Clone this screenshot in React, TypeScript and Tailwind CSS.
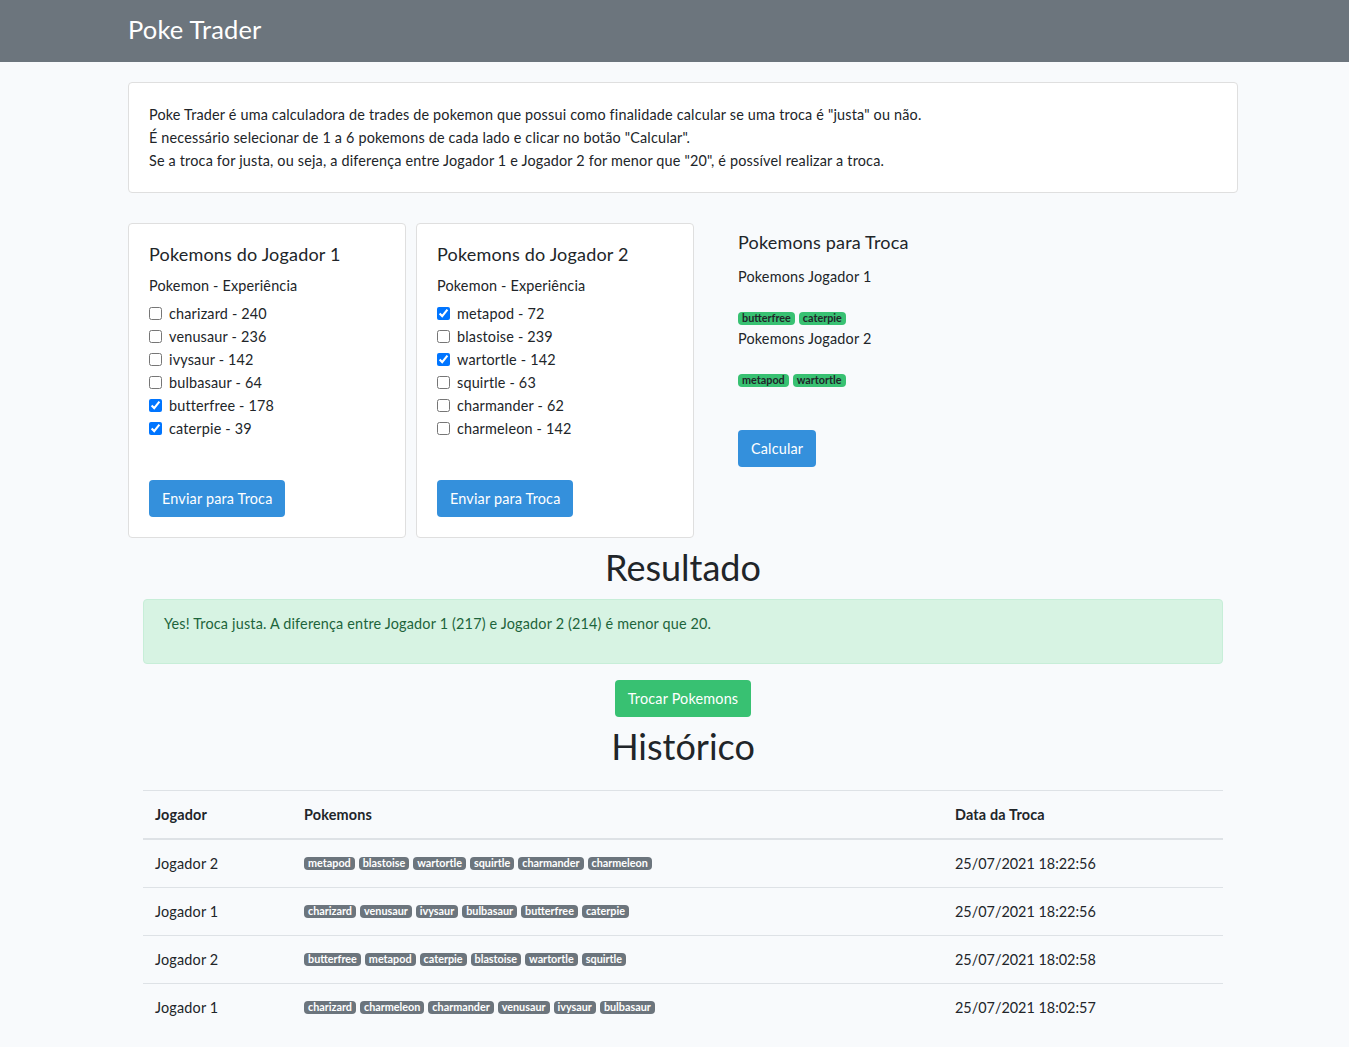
import React from "react";

const font = { fontFamily: "Lato, 'Noto Sans', sans-serif" };

function Badge({ children, tone }: { children: React.ReactNode; tone: "green" | "gray" }) {
  return (
    <span
      className={
        "inline-flex items-center h-[13px] rounded-[4px] px-[4px] text-[10.8px] font-bold leading-none mr-[4px] tracking-normal " +
        (tone === "green" ? "bg-[#38c172] text-[#212529]" : "bg-[#6c757d] text-white")
      }
    >
      {children}
    </span>
  );
}

function PlayerCard({ title, items }: { title: string; items: [string, boolean][] }) {
  return (
    <div className="w-[278px] h-[315px] rounded-[4px] border border-[#dfdfdf] bg-white px-[20px] pt-[19px] flex flex-col">
      <div className="text-[18px] leading-[22px] text-[#212529]">{title}</div>
      <div className="leading-[23px] pt-[9px]">Pokemon - Experiência</div>
      <div className="pt-[5px]">
        {items.map(([name, checked]) => (
          <label key={name} className="flex items-center h-[23px]">
            <input type="checkbox" defaultChecked={checked} className="w-[13px] h-[13px] m-0 mr-[7px]" />
            <span>{name}</span>
          </label>
        ))}
      </div>
      <div className="pt-[40px]">
        <button className="h-[37px] px-[13px] rounded-[4px] bg-[#3490dc] text-white text-[14.4px]">
          Enviar para Troca
        </button>
      </div>
    </div>
  );
}

const history: { j: string; p: string[]; d: string }[] = [
  { j: "Jogador 2", p: ["metapod", "blastoise", "wartortle", "squirtle", "charmander", "charmeleon"], d: "25/07/2021 18:22:56" },
  { j: "Jogador 1", p: ["charizard", "venusaur", "ivysaur", "bulbasaur", "butterfree", "caterpie"], d: "25/07/2021 18:22:56" },
  { j: "Jogador 2", p: ["butterfree", "metapod", "caterpie", "blastoise", "wartortle", "squirtle"], d: "25/07/2021 18:02:58" },
  { j: "Jogador 1", p: ["charizard", "charmeleon", "charmander", "venusaur", "ivysaur", "bulbasaur"], d: "25/07/2021 18:02:57" },
];

export default function App() {
  return (
    <div className="min-h-[1047px] bg-[#f8fafc] text-[#212529] text-[14.4px] leading-[23px] tracking-[0.18px]" style={font}>
      <nav className="h-[62px] bg-[#6c757d] flex items-center pb-[3px]">
        <div className="ml-[128px] text-white text-[25.5px] leading-none">Poke Trader</div>
      </nav>
      <div className="ml-[128px] w-[1110px]">
        <div className="mt-[20px] rounded-[4px] border border-[#dfdfdf] bg-white p-[20px]">
          <p>Poke Trader é uma calculadora de trades de pokemon que possui como finalidade calcular se uma troca é "justa" ou não.</p>
          <p>É necessário selecionar de 1 a 6 pokemons de cada lado e clicar no botão "Calcular".</p>
          <p>Se a troca for justa, ou seja, a diferença entre Jogador 1 e Jogador 2 for menor que "20", é possível realizar a troca.</p>
        </div>
        <div className="mt-[30px] flex">
          <PlayerCard
            title="Pokemons do Jogador 1"
            items={[["charizard - 240", false], ["venusaur - 236", false], ["ivysaur - 142", false], ["bulbasaur - 64", false], ["butterfree - 178", true], ["caterpie - 39", true]]}
          />
          <div className="w-[10px]" />
          <PlayerCard
            title="Pokemons do Jogador 2"
            items={[["metapod - 72", true], ["blastoise - 239", false], ["wartortle - 142", true], ["squirtle - 63", false], ["charmander - 62", false], ["charmeleon - 142", false]]}
          />
          <div className="ml-[44px] pt-[8px]">
            <div className="text-[18px] leading-[22px]">Pokemons para Troca</div>
            <div className="mt-[12px]">Pokemons Jogador 1</div>
            <div className="mt-[22px] h-[16px] flex items-center">
              <Badge tone="green">butterfree</Badge>
              <Badge tone="green">caterpie</Badge>
            </div>
            <div className="mt-[1px]">Pokemons Jogador 2</div>
            <div className="mt-[22px] h-[16px] flex items-center">
              <Badge tone="green">metapod</Badge>
              <Badge tone="green">wartortle</Badge>
            </div>
            <button className="mt-[42px] h-[37px] px-[13px] rounded-[4px] bg-[#3490dc] text-white text-[14.4px]">Calcular</button>
          </div>
        </div>
        <div className="px-[15px]">
          <h1 className="text-center text-[36px] leading-[43px] mt-[8px] tracking-normal">Resultado</h1>
          <div className="mt-[10px] rounded-[4px] border border-[#c7eed8] bg-[#d7f3e3] text-[#1d643b] px-[20px] pt-[12px] pb-[28px]">
            Yes! Troca justa. A diferença entre Jogador 1 (217) e Jogador 2 (214) é menor que 20.
          </div>
          <div className="flex justify-center mt-[16px]">
            <button className="h-[37px] px-[13px] rounded-[4px] bg-[#38c172] text-white text-[14.4px]">Trocar Pokemons</button>
          </div>
          <h1 className="text-center text-[36px] leading-[43px] mt-[8px] tracking-normal">Histórico</h1>
          <table className="mt-[22px] w-full border-collapse">
            <colgroup>
              <col className="w-[149px]" />
              <col className="w-[651px]" />
              <col />
            </colgroup>
            <thead>
              <tr className="border-t border-[#dee2e6] border-b-2">
                <th className="text-left font-bold px-[12px] py-[12px]">Jogador</th>
                <th className="text-left font-bold px-[12px] py-[12px]">Pokemons</th>
                <th className="text-left font-bold px-[12px] py-[12px]">Data da Troca</th>
              </tr>
            </thead>
            <tbody>
              {history.map((r, i) => (
                <tr key={i} className={i > 0 ? "border-t border-[#dee2e6]" : ""}>
                  <td className="px-[12px] py-[12px] align-middle">{r.j}</td>
                  <td className="px-[12px] py-[12px] align-middle">
                    <div className="flex items-center">
                      {r.p.map((x) => (
                        <Badge key={x} tone="gray">{x}</Badge>
                      ))}
                    </div>
                  </td>
                  <td className="px-[12px] py-[12px] align-middle tracking-normal">{r.d}</td>
                </tr>
              ))}
            </tbody>
          </table>
        </div>
      </div>
    </div>
  );
}
